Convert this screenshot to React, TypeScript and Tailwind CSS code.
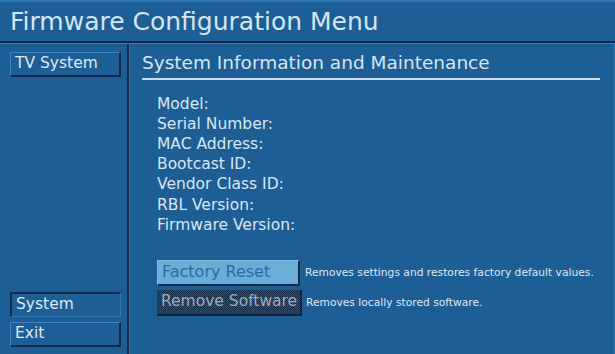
import React from 'react';

const infoRows = ['Model:', 'Serial Number:', 'MAC Address:', 'Bootcast ID:', 'Vendor Class ID:', 'RBL Version:', 'Firmware Version:'];

const NavButton: React.FC<{ label: string; selected?: boolean }> = ({ label, selected }) => {
    const cls = selected
        ? 'border-t-2 border-l-2 border-b border-r border-t-[#13294a] border-l-[#13294a] border-b-[#2f78b4] border-r-[#2f78b4]'
        : 'border-t border-l border-b-2 border-r-2 border-t-[#3a86c4] border-l-[#3a86c4] border-b-[#13294a] border-r-[#13294a]';
    return (
        <div className={`w-[111px] h-[25px] flex items-center pl-[4px] text-[15.5px] text-[#dce9f5] leading-none ${cls}`}>
            {label}
        </div>
    );
};

export default function App() {
    return (
        <div className="w-[615px] h-[354px] bg-[#1d5e95] flex flex-col overflow-hidden" style={{ fontFamily: '"DejaVu Sans", sans-serif' }}>
            {/* Title bar */}
            <div className="h-[43px] border-t-2 border-t-[#2a78b8] border-b-2 border-b-[#15274a] flex items-center pl-[10px]">
                <span className="text-[25px] text-[#d4e5f4] leading-none">Firmware Configuration Menu</span>
            </div>

            <div className="flex-1 flex border-t border-t-[#2c86b0]">
                {/* Sidebar */}
                <div className="w-[129px] flex flex-col justify-between pt-[8px] pb-[7px] pl-[10px] border-r-2 border-r-[#15274a]">
                    <NavButton label="TV System" />
                    <div className="flex flex-col gap-[5px]">
                        <NavButton label="System" selected />
                        <NavButton label="Exit" />
                    </div>
                </div>

                {/* Main panel */}
                <div className="flex-1 flex flex-col pl-[12px] pr-[14px] pt-[10px] border-l border-l-[#2a6fa8] border-r border-r-[#2f7cb8]">
                    <div className="text-[18.5px] text-[#d4e5f4] leading-none pb-[5px] border-b-2 border-b-[#c9def0] whitespace-nowrap">
                        System Information and Maintenance
                    </div>
                    <div className="flex flex-col pl-[15px] pt-[14px] text-[15.5px] text-[#d8e7f4] leading-[20.2px]">
                        {infoRows.map(r => (
                            <div key={r}>{r}</div>
                        ))}
                    </div>
                    <div className="flex flex-col gap-[4px] pl-[15px] mt-[25px]">
                        <div className="flex items-center gap-[5px]">
                            <div className="w-[143px] h-[26px] flex items-center pl-[4px] bg-[#6aaed8] border-b-2 border-r-2 border-b-[#13294a] border-r-[#13294a] border-t border-l border-t-[#7fc0e4] border-l-[#7fc0e4] text-[16px] text-[#2b6a9c] leading-none whitespace-nowrap">
                                Factory Reset
                            </div>
                            <span className="text-[10.7px] text-[#dce9f5] leading-none whitespace-nowrap">Removes settings and restores factory default values.</span>
                        </div>
                        <div className="flex items-center gap-[4px]">
                            <div className="w-[145px] h-[26px] flex items-center pl-[4px] bg-[repeating-conic-gradient(#142b47_0_25%,#34526f_0_50%)] bg-[length:2px_2px] border-b-2 border-r-2 border-b-[#10213c] border-r-[#10213c] text-[15.5px] text-[#9dabb9] leading-none whitespace-nowrap overflow-hidden">
                                Remove Software
                            </div>
                            <span className="text-[10.7px] text-[#dce9f5] leading-none whitespace-nowrap">Removes locally stored software.</span>
                        </div>
                    </div>
                </div>
            </div>
        </div>
    );
}
